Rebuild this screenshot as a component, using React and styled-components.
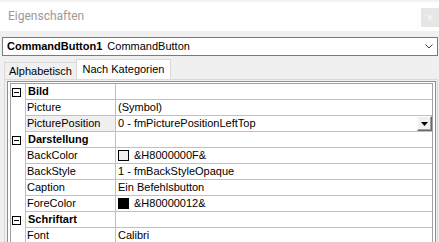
import React from "react";
import styled, { createGlobalStyle } from "styled-components";

const Global = createGlobalStyle`
  html, body { margin: 0; padding: 0; background: #f0f0f0; overflow: hidden; }
  * { box-sizing: border-box; }
`;

const Window = styled.div`
  width: 439px;
  height: 242px;
  overflow: hidden;
  display: flex;
  flex-direction: column;
  font-family: "Liberation Sans", Arial, sans-serif;
  font-size: 11px;
  color: #000;
`;

const TopStrip = styled.div`
  height: 2px;
  background: #f3f3f3;
  flex: none;
`;

const TitleBar = styled.div`
  height: 29px;
  flex: none;
  background: #fff;
  display: flex;
  align-items: flex-start;
  justify-content: space-between;
  padding-left: 8px;
`;

const Title = styled.div`
  margin-top: 7px;
  font-family: Roboto, "Liberation Sans", sans-serif;
  font-size: 12px;
  line-height: 14px;
  color: #9a9a9a;
`;

const CloseButton = styled.div`
  margin-top: 6px;
  width: 18px;
  height: 19px;
  background: #e6e6e6;
  color: #fafafa;
  display: flex;
  align-items: center;
  justify-content: center;
  font-size: 12px;
  line-height: 1;
`;

const Body = styled.div`
  flex: 1;
  display: flex;
  flex-direction: column;
  background: #f0f0f0;
  padding: 6px 1px 0 2px;
  min-height: 0;
`;

const Combo = styled.div`
  height: 19px;
  flex: none;
  border: 1px solid #7a7a7a;
  background: #fff;
  display: flex;
  align-items: center;
  padding: 0 4px 0 4px;
  line-height: 15px;
`;

const ComboName = styled.span`
  font-weight: bold;
  margin-right: 5px;
`;

const ComboType = styled.span`
  flex: 1;
`;

const Tabs = styled.div`
  margin-top: 3px;
  height: 20px;
  flex: none;
  display: flex;
  align-items: flex-end;
  padding-left: 2px;
`;

const Tab = styled.div`
  height: ${(p) => (p.$active ? 20 : 17)}px;
  width: ${(p) => p.$w}px;
  border: 1px solid #d9d9d9;
  border-bottom: none;
  background: ${(p) => (p.$active ? "#fff" : "#f0f0f0")};
  display: flex;
  align-items: center;
  justify-content: center;
  padding-bottom: ${(p) => (p.$active ? 1 : 0)}px;
  margin-left: ${(p) => (p.$active ? -1 : 0)}px;
  white-space: nowrap;
`;

const TabPanel = styled.div`
  flex: 1;
  margin-left: 2px;
  border: 1px solid #d9d9d9;
  border-bottom: none;
  padding: 1px 1px 0 2px;
  background: #f0f0f0;
  min-height: 0;
`;

const Frame = styled.div`
  height: 100%;
  border: 1px solid #8f8f8f;
  border-bottom: none;
  background: #fff;
  padding: 1px 2px 0 2px;
`;

const Grid = styled.div`
  height: 100%;
  border: 1px solid #a0a0a0;
  border-bottom: none;
  display: grid;
  grid-template-columns: 15px 90px 1fr;
  grid-auto-rows: 16px;
  align-content: start;
`;

const Expander = styled.div`
  border-right: 1px solid #c0c0c0;
  display: flex;
  align-items: center;
  padding-left: 1px;
`;

const MinusBox = styled.div`
  width: 9px;
  height: 9px;
  border: 1px solid #000;
  position: relative;
  &::after {
    content: "";
    position: absolute;
    left: 1px;
    right: 1px;
    top: 3px;
    height: 1px;
    background: #000;
  }
`;

const NameCell = styled.div`
  border-right: 1px solid #c0c0c0;
  border-bottom: 1px solid #c0c0c0;
  background: ${(p) => (p.$selected ? "#f0f0f0" : "#fff")};
  font-weight: ${(p) => (p.$category ? "bold" : "normal")};
  padding-left: ${(p) => (p.$category ? 2 : 1)}px;
  display: flex;
  align-items: center;
  white-space: nowrap;
  overflow: hidden;
  line-height: 15px;
`;

const ValueCell = styled.div`
  border-bottom: 1px solid #c0c0c0;
  display: flex;
  align-items: center;
  padding-left: 2px;
  white-space: nowrap;
  overflow: hidden;
  line-height: 15px;
`;

const ValueText = styled.span`
  flex: 1;
`;

const Swatch = styled.span`
  width: 11px;
  height: 11px;
  border: 1px solid #000;
  background: ${(p) => p.$color};
  margin-right: 5px;
  flex: none;
`;

const DropButton = styled.div`
  width: 15px;
  height: 15px;
  flex: none;
  background: #f0f0f0;
  border-top: 1px solid #fff;
  border-left: 1px solid #fff;
  border-right: 1px solid #696969;
  border-bottom: 1px solid #696969;
  box-shadow: inset -1px -1px 0 #a0a0a0;
  display: flex;
  align-items: center;
  justify-content: center;
`;

const rows = [
  { cat: "Bild" },
  { name: "Picture", value: "(Symbol)" },
  { name: "PicturePosition", value: "0 - fmPicturePositionLeftTop", selected: true },
  { cat: "Darstellung" },
  { name: "BackColor", value: "&H8000000F&", swatch: "#f0f0f0" },
  { name: "BackStyle", value: "1 - fmBackStyleOpaque" },
  { name: "Caption", value: "Ein Befehlsbutton" },
  { name: "ForeColor", value: "&H80000012&", swatch: "#000" },
  { cat: "Schriftart" },
  { name: "Font", value: "Calibri" },
];

export default function App() {
  return (
    <>
      <Global />
      <Window>
        <TopStrip />
        <TitleBar>
          <Title>Eigenschaften</Title>
          <CloseButton>×</CloseButton>
        </TitleBar>
        <Body>
          <Combo>
            <ComboName>CommandButton1</ComboName>
            <ComboType>CommandButton</ComboType>
            <svg width="8" height="5" viewBox="0 0 8 5">
              <path d="M0.5 0.5 L4 4 L7.5 0.5" fill="none" stroke="#444" strokeWidth="1" />
            </svg>
          </Combo>
          <Tabs>
            <Tab $w={73}>Alphabetisch</Tab>
            <Tab $w={95} $active>Nach Kategorien</Tab>
          </Tabs>
          <TabPanel>
            <Frame>
              <Grid>
                {rows.map((r, i) =>
                  r.cat ? (
                    <React.Fragment key={i}>
                      <Expander>
                        <MinusBox />
                      </Expander>
                      <NameCell $category>{r.cat}</NameCell>
                      <ValueCell />
                    </React.Fragment>
                  ) : (
                    <React.Fragment key={i}>
                      <Expander />
                      <NameCell $selected={r.selected}>{r.name}</NameCell>
                      <ValueCell>
                        {r.swatch && <Swatch $color={r.swatch} />}
                        <ValueText>{r.value}</ValueText>
                        {r.selected && (
                          <DropButton>
                            <svg width="7" height="4" viewBox="0 0 7 4">
                              <path d="M0 0 H7 L3.5 4 Z" fill="#000" />
                            </svg>
                          </DropButton>
                        )}
                      </ValueCell>
                    </React.Fragment>
                  )
                )}
              </Grid>
            </Frame>
          </TabPanel>
        </Body>
      </Window>
    </>
  );
}
